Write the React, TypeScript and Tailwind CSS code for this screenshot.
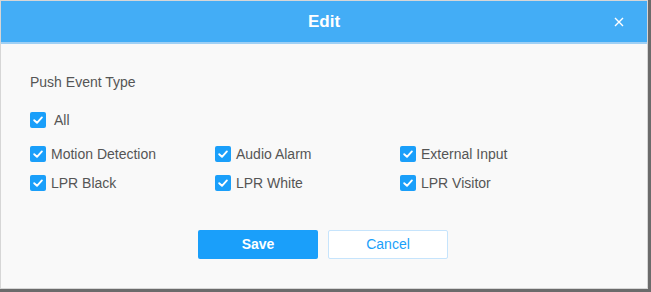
import React from "react";

const rows = [
  ["Motion Detection", "Audio Alarm", "External Input"],
  ["LPR Black", "LPR White", "LPR Visitor"],
];

function Box() {
  return (
    <span className="flex h-4 w-4 shrink-0 items-center justify-center rounded-[2px] bg-[#1a9ffa]">
      <svg width="12" height="12" viewBox="0 0 12 12" fill="none">
        <path d="M2.2 6.2 L5 8.8 L9.9 3.4" stroke="white" strokeWidth="1.9" strokeLinecap="round" strokeLinejoin="round" />
      </svg>
    </span>
  );
}

function Check({ label, gap = "gap-[5px]" }: { label: string; gap?: string }) {
  return (
    <label className={`flex h-[18px] items-center ${gap} text-[14px] leading-[18px] text-[#555]`}>
      <Box />
      <span>{label}</span>
    </label>
  );
}

export default function App() {
  return (
    <div className="h-[292px] w-[651px] bg-[#6b6b6b] font-['Liberation_Sans',Arial,sans-serif]">
      <div className="flex h-[289px] w-[648px] flex-col border border-[#d6d6d6] bg-[#f9f9f9]">
        <div className="relative flex h-[43px] shrink-0 items-center justify-center border-b-2 border-[#9fd0f5] bg-[#43adf6] text-[17px] font-bold text-white">
          Edit
          <svg className="absolute right-[23px] top-[16px]" width="10" height="10" viewBox="0 0 10 10">
            <path d="M1 1 L9 9 M9 1 L1 9" stroke="white" strokeWidth="1.4" />
          </svg>
        </div>
        <div className="flex flex-col px-[29px] pt-[28px]">
          <div className="text-[14px] leading-[20px] text-[#555]">Push Event Type</div>
          <div className="mt-[19px]">
            <Check label="All" gap="gap-[8px]" />
          </div>
          <div className="mt-[16px] flex flex-col gap-[11px]">
            {rows.map((r, i) => (
              <div key={i} className="grid grid-cols-[185px_185px_185px]">
                {r.map((l) => (
                  <Check key={l} label={l} />
                ))}
              </div>
            ))}
          </div>
          <div className="mt-[38px] flex justify-center gap-[10px] pr-[2px]">
            <button className="h-[29px] w-[120px] rounded-[2px] bg-[#1a9ffa] text-[14px] font-bold text-white">Save</button>
            <button className="h-[29px] w-[120px] rounded-[2px] border border-[#c6e4fc] bg-white text-[14px] text-[#1a9ffa]">Cancel</button>
          </div>
        </div>
      </div>
    </div>
  );
}
